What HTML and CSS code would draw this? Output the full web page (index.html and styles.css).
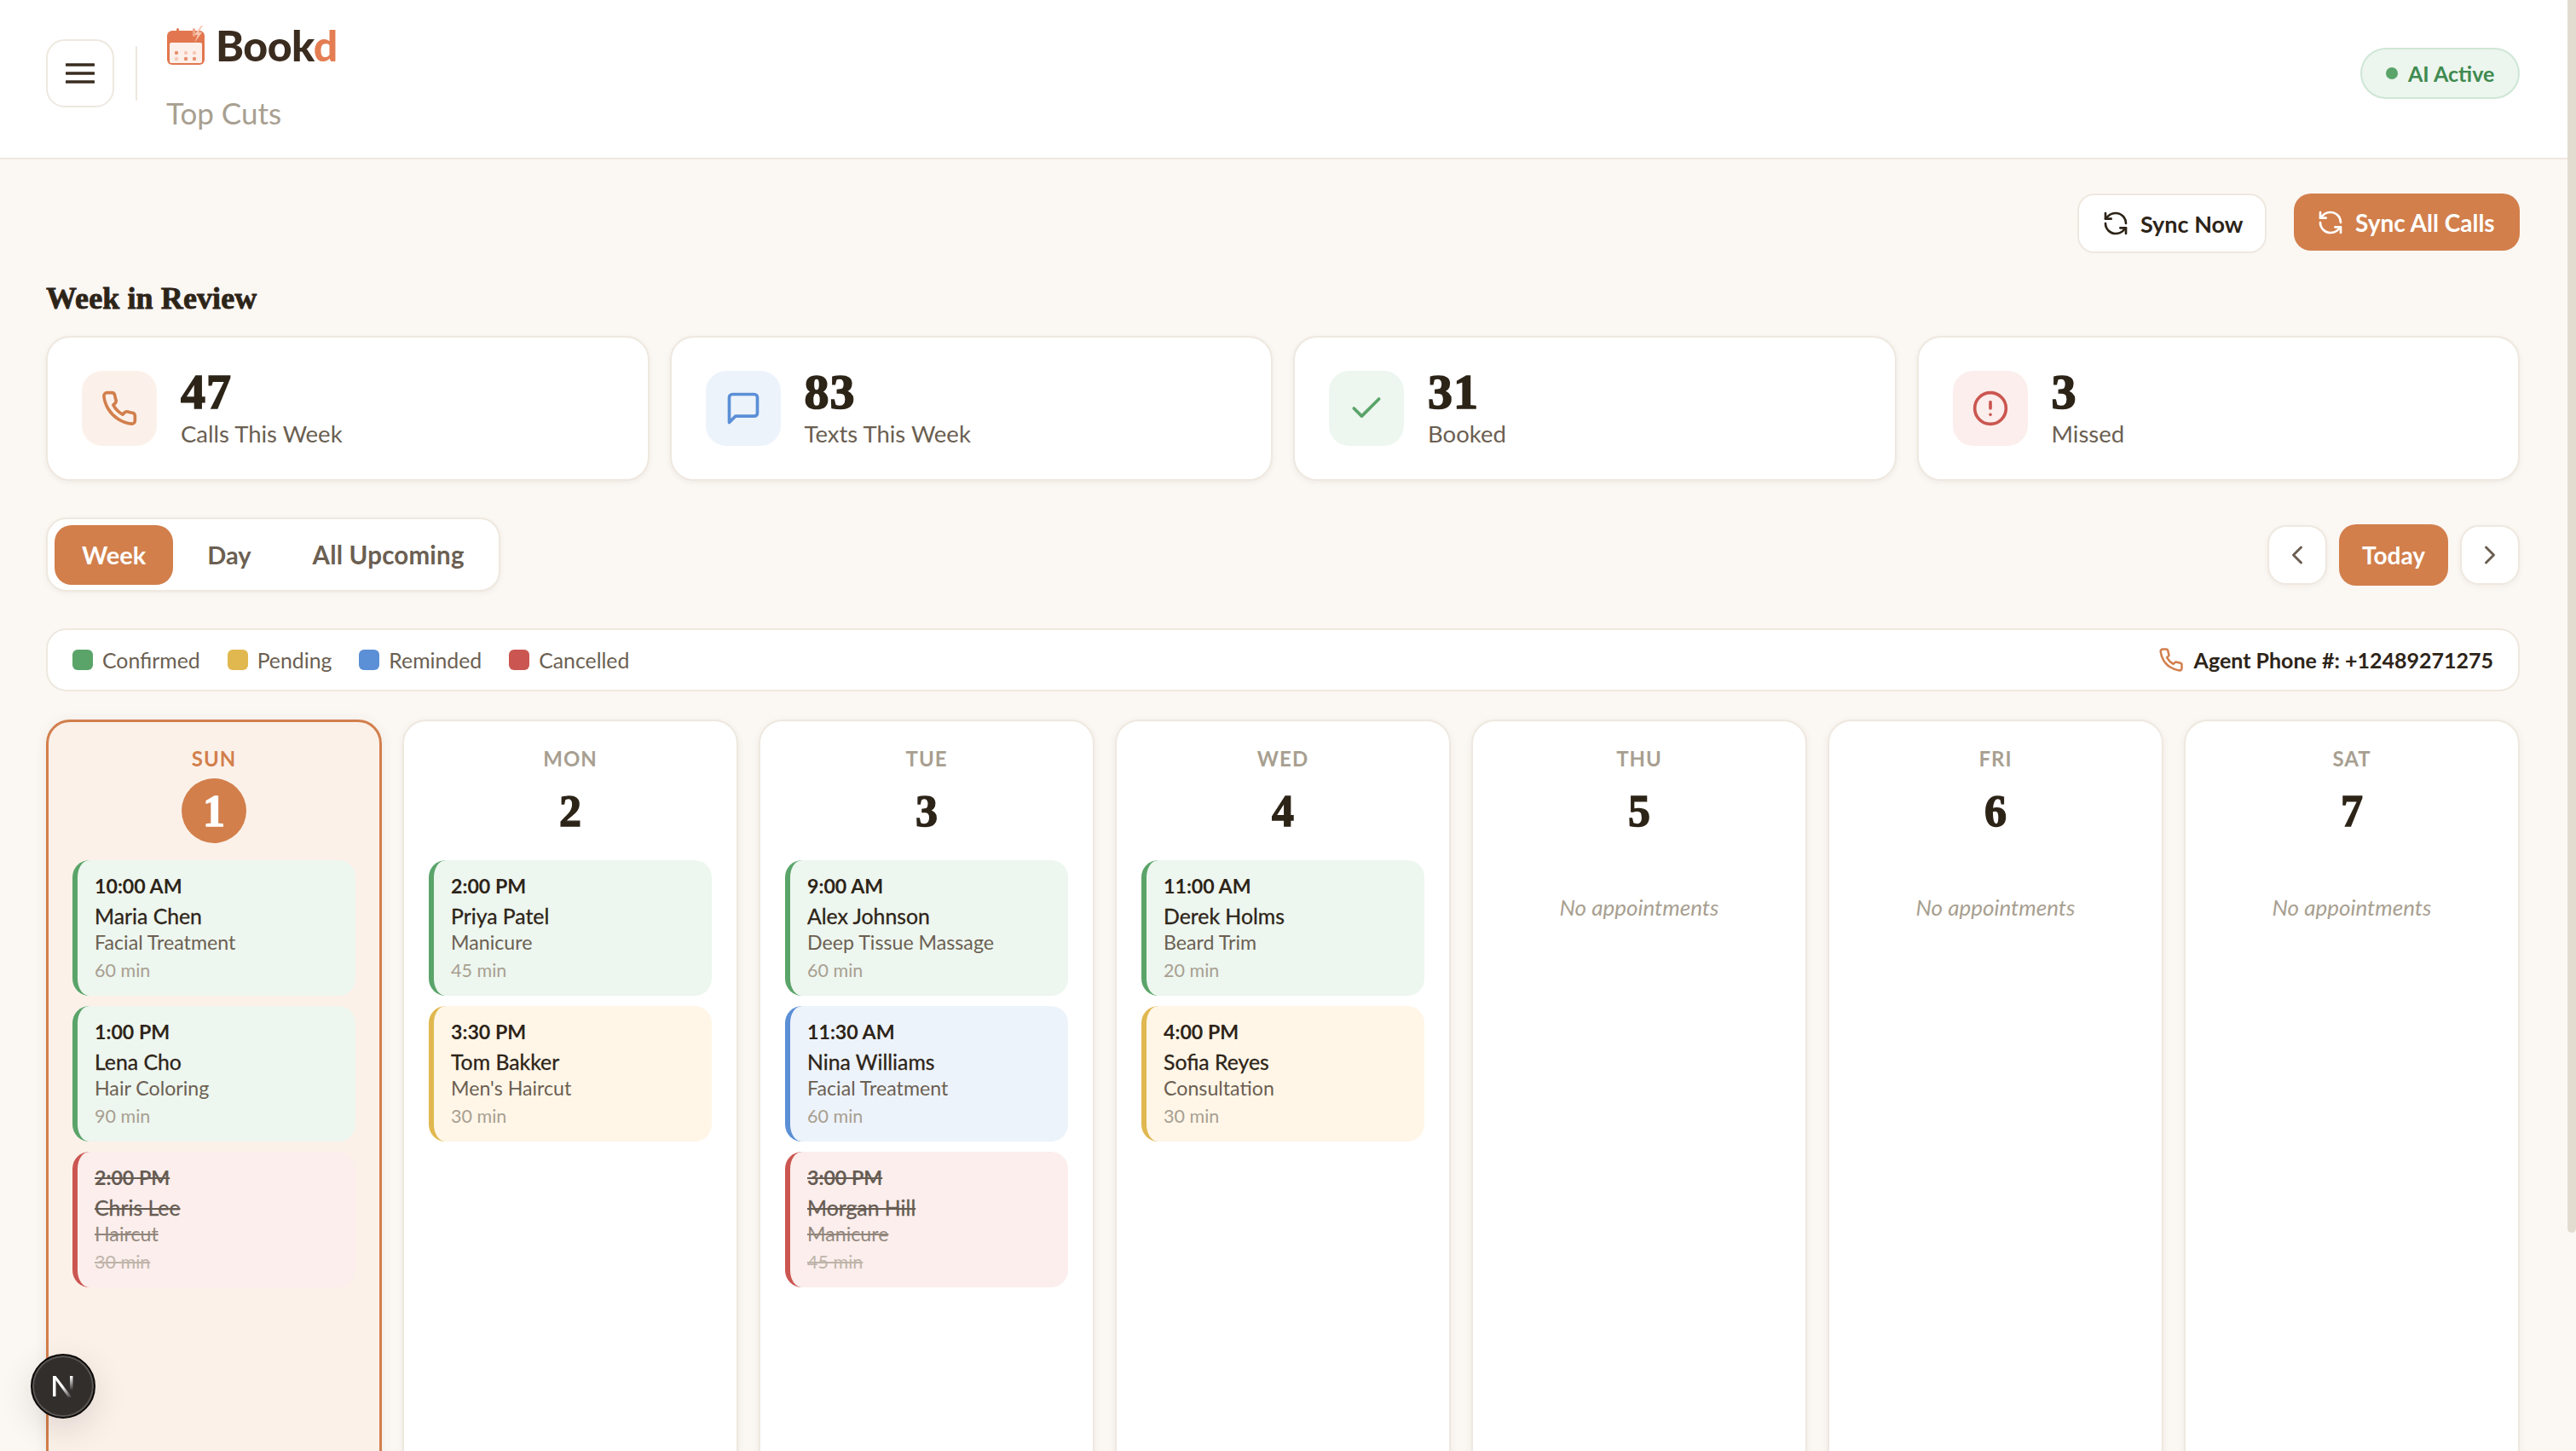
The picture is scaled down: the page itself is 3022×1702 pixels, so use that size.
FILE: index.html
```html
<!DOCTYPE html>
<html lang="en">
<head>
<meta charset="utf-8">
<title>Bookd</title>
<link rel="stylesheet" href="styles.css">
</head>
<body>
<svg class="sprite" aria-hidden="true">
  <symbol id="i-phone" viewBox="0 0 24 24"><path d="M22 16.92v3a2 2 0 0 1-2.18 2 19.79 19.79 0 0 1-8.63-3.07 19.5 19.5 0 0 1-6-6 19.79 19.79 0 0 1-3.07-8.67A2 2 0 0 1 4.11 2h3a2 2 0 0 1 2 1.72 12.84 12.84 0 0 0 .7 2.81 2 2 0 0 1-.45 2.11L8.09 9.91a16 16 0 0 0 6 6l1.27-1.27a2 2 0 0 1 2.11-.45 12.84 12.84 0 0 0 2.81.7A2 2 0 0 1 22 16.92z"/></symbol>
  <symbol id="i-sync" viewBox="0 0 24 24"><path d="M21 12a9 9 0 0 0-9-9 9.75 9.75 0 0 0-6.74 2.74L3 8"/><path d="M3 3v5h5"/><path d="M3 12a9 9 0 0 0 9 9 9.75 9.75 0 0 0 6.74-2.74L21 16"/><path d="M16 16h5v5"/></symbol>
</svg>

<header class="topbar">
  <button class="menu-btn" aria-label="Menu">
    <svg class="menu-icon" viewBox="0 0 34 24"><path d="M1 2h32M1 12h32M1 22h32"/></svg>
  </button>
  <span class="topbar-divider"></span>
  <div class="brand">
    <div class="brand-row">
      <svg class="brand-logo" viewBox="0 0 46 48">
        <rect x="1" y="7" width="44" height="40" rx="6" fill="#e2774f"/>
        <rect x="4" y="21" width="38" height="24" rx="2" fill="#fdf0ea"/>
        <rect x="12" y="4" width="3" height="10" rx="1.5" fill="#e2774f"/>
        <rect x="31" y="4" width="3" height="10" rx="1.5" fill="#f0a488"/>
        <path d="M41 1l-8 11h4l-4 9 9-12h-4l5-8z" fill="#f8c7b2"/>
        <g fill="#e8906f"><circle cx="12" cy="33" r="2.2"/><circle cx="23" cy="40" r="2.2"/><circle cx="33" cy="40" r="2.2"/></g>
        <g fill="#f6c9b7"><circle cx="23" cy="33" r="2.2"/><circle cx="12" cy="40" r="2.2"/><circle cx="33" cy="33" r="2.2"/></g>
      </svg>
      <span class="brand-name">Book<span class="brand-accent">d</span></span>
    </div>
    <div class="brand-sub">Top Cuts</div>
  </div>
  <div class="status-pill"><span class="status-dot"></span>AI Active</div>
</header>

<main class="content">
  <div class="actions">
    <button class="btn btn-ghost"><svg class="btn-icon"><use href="#i-sync"/></svg>Sync Now</button>
    <button class="btn btn-primary"><svg class="btn-icon"><use href="#i-sync"/></svg>Sync All Calls</button>
  </div>

  <h2 class="section-title">Week in Review</h2>
  <section class="stats">
    <div class="stat">
      <div class="stat-icon tint-orange"><svg class="stat-svg"><use href="#i-phone"/></svg></div>
      <div><div class="stat-num">47</div><div class="stat-label">Calls This Week</div></div>
    </div>
    <div class="stat">
      <div class="stat-icon tint-blue"><svg class="stat-svg" viewBox="0 0 24 24"><path d="M21 15a2 2 0 0 1-2 2H7l-4 4V5a2 2 0 0 1 2-2h14a2 2 0 0 1 2 2z"/></svg></div>
      <div><div class="stat-num">83</div><div class="stat-label">Texts This Week</div></div>
    </div>
    <div class="stat">
      <div class="stat-icon tint-green"><svg class="stat-svg" viewBox="0 0 24 24"><path d="M20 6 9 17l-5-5"/></svg></div>
      <div><div class="stat-num">31</div><div class="stat-label">Booked</div></div>
    </div>
    <div class="stat">
      <div class="stat-icon tint-red"><svg class="stat-svg" viewBox="0 0 24 24"><circle cx="12" cy="12" r="10"/><path d="M12 8v4M12 16h.01"/></svg></div>
      <div><div class="stat-num">3</div><div class="stat-label">Missed</div></div>
    </div>
  </section>

  <div class="toolbar">
    <div class="tabs">
      <span class="tab tab-active">Week</span>
      <span class="tab">Day</span>
      <span class="tab tab-wide">All Upcoming</span>
    </div>
    <div class="pager">
      <button class="page-btn" aria-label="Previous"><svg class="chev" viewBox="0 0 24 24"><path d="m15 18-6-6 6-6"/></svg></button>
      <button class="today-btn">Today</button>
      <button class="page-btn" aria-label="Next"><svg class="chev" viewBox="0 0 24 24"><path d="m9 18 6-6-6-6"/></svg></button>
    </div>
  </div>

  <div class="legend">
    <div class="legend-items">
      <span class="legend-item"><i class="swatch bg-green"></i>Confirmed</span>
      <span class="legend-item"><i class="swatch bg-yellow"></i>Pending</span>
      <span class="legend-item"><i class="swatch bg-blue"></i>Reminded</span>
      <span class="legend-item"><i class="swatch bg-red"></i>Cancelled</span>
    </div>
    <div class="agent"><svg class="agent-icon"><use href="#i-phone"/></svg>Agent Phone #: +12489271275</div>
  </div>

  <section class="week">
    <div class="day day-today">
      <div class="day-name">SUN</div>
      <div class="day-num">1</div>
      <div class="appts">
        <article class="appt appt-green"><div class="a-time">10:00 AM</div><div class="a-name">Maria Chen</div><div class="a-svc">Facial Treatment</div><div class="a-dur">60 min</div></article>
        <article class="appt appt-green"><div class="a-time">1:00 PM</div><div class="a-name">Lena Cho</div><div class="a-svc">Hair Coloring</div><div class="a-dur">90 min</div></article>
        <article class="appt appt-red"><div class="a-time">2:00 PM</div><div class="a-name">Chris Lee</div><div class="a-svc">Haircut</div><div class="a-dur">30 min</div></article>
      </div>
    </div>
    <div class="day">
      <div class="day-name">MON</div>
      <div class="day-num">2</div>
      <div class="appts">
        <article class="appt appt-green"><div class="a-time">2:00 PM</div><div class="a-name">Priya Patel</div><div class="a-svc">Manicure</div><div class="a-dur">45 min</div></article>
        <article class="appt appt-yellow"><div class="a-time">3:30 PM</div><div class="a-name">Tom Bakker</div><div class="a-svc">Men's Haircut</div><div class="a-dur">30 min</div></article>
      </div>
    </div>
    <div class="day">
      <div class="day-name">TUE</div>
      <div class="day-num">3</div>
      <div class="appts">
        <article class="appt appt-green"><div class="a-time">9:00 AM</div><div class="a-name">Alex Johnson</div><div class="a-svc">Deep Tissue Massage</div><div class="a-dur">60 min</div></article>
        <article class="appt appt-blue"><div class="a-time">11:30 AM</div><div class="a-name">Nina Williams</div><div class="a-svc">Facial Treatment</div><div class="a-dur">60 min</div></article>
        <article class="appt appt-red"><div class="a-time">3:00 PM</div><div class="a-name">Morgan Hill</div><div class="a-svc">Manicure</div><div class="a-dur">45 min</div></article>
      </div>
    </div>
    <div class="day">
      <div class="day-name">WED</div>
      <div class="day-num">4</div>
      <div class="appts">
        <article class="appt appt-green"><div class="a-time">11:00 AM</div><div class="a-name">Derek Holms</div><div class="a-svc">Beard Trim</div><div class="a-dur">20 min</div></article>
        <article class="appt appt-yellow"><div class="a-time">4:00 PM</div><div class="a-name">Sofia Reyes</div><div class="a-svc">Consultation</div><div class="a-dur">30 min</div></article>
      </div>
    </div>
    <div class="day"><div class="day-name">THU</div><div class="day-num">5</div><div class="empty">No appointments</div></div>
    <div class="day"><div class="day-name">FRI</div><div class="day-num">6</div><div class="empty">No appointments</div></div>
    <div class="day"><div class="day-name">SAT</div><div class="day-num">7</div><div class="empty">No appointments</div></div>
  </section>
</main>

<div class="scroll-thumb"></div>

<div class="dev-badge">
  <svg class="dev-n" viewBox="0 0 26 26">
    <defs>
      <linearGradient id="n-diag" x1="0" y1="0" x2="1" y2="1"><stop offset="0.5" stop-color="#fff"/><stop offset="1" stop-color="#fff" stop-opacity="0"/></linearGradient>
      <linearGradient id="n-stem" x1="0" y1="0" x2="0" y2="1"><stop offset="0" stop-color="#fff"/><stop offset="1" stop-color="#fff" stop-opacity="0"/></linearGradient>
    </defs>
    <path d="M1 1h3.5v24H1z" fill="#fff"/>
    <path d="M1 1h3.5l19 25h-4.5z" fill="url(#n-diag)"/>
    <rect x="21" y="1" width="3.5" height="17" fill="url(#n-stem)"/>
  </svg>
</div>
</body>
</html>
```

FILE: styles.css
```css
* { box-sizing: border-box; }
html, body { margin: 0; height: 100%; overflow: hidden; }
body {
  background: #fbf7f3;
  color: #2d2418;
  font-family: "Lato", "Noto Sans", sans-serif;
  padding-right: 10px;
}
button { font-family: inherit; cursor: pointer; }
.sprite { position: absolute; width: 0; height: 0; }

/* Top bar */
.topbar {
  height: 187px;
  background: #fff;
  border-bottom: 2px solid #eee8df;
  display: flex;
  align-items: flex-start;
  padding: 0 56px 0 54px;
}
.menu-btn {
  width: 80px; height: 80px;
  margin-top: 46px;
  background: #fff;
  border: 2px solid #eee8df;
  border-radius: 22px;
  padding: 0;
  display: flex; align-items: center; justify-content: center;
}
.menu-icon { width: 34px; height: 24px; fill: none; stroke: #3a2d20; stroke-width: 3.5; stroke-linecap: round; }
.topbar-divider { width: 2px; height: 64px; margin: 54px 34px 0 25px; background: #eee8df; }
.brand { display: flex; flex-direction: column; gap: 32px; padding-top: 29px; }
.brand-row { display: flex; align-items: center; gap: 12px; height: 48px; }
.brand-logo { width: 46px; height: 48px; }
.brand-name { font-size: 50px; font-weight: 900; color: #3b2c20; letter-spacing: -0.5px; }
.brand-accent { color: #e47e52; }
.brand-sub { font-size: 35px; line-height: 46px; color: #a89f91; }
.status-pill {
  margin: 56px 0 0 auto;
  height: 60px; width: 187px;
  border-radius: 30px;
  background: #ecf5ee;
  border: 2px solid #cfe6d6;
  color: #3f8a50;
  font-size: 25px; font-weight: 700;
  display: flex; align-items: center; gap: 12px;
  padding-left: 28px;
}
.status-dot { width: 14px; height: 14px; border-radius: 50%; background: #5aa469; }

/* Content */
.content { padding: 40px 56px 0 54px; }
.actions { display: flex; justify-content: flex-end; align-items: flex-start; gap: 32px; height: 70px; }
.btn {
  display: flex; align-items: center; gap: 13px;
  border-radius: 20px;
  font-size: 28px; font-weight: 700;
  padding: 0 27px;
  white-space: nowrap;
}
.btn-ghost { height: 70px; width: 222px; background: #fff; border: 2px solid #eee8df; color: #2d2418; font-size: 27px; }
.btn-primary { height: 67px; width: 265px; background: #d27f4c; border: 0; color: #fff; }
.btn-icon { width: 32px; height: 32px; flex: none; fill: none; stroke: currentColor; stroke-width: 2; stroke-linecap: round; stroke-linejoin: round; }

.section-title {
  font-family: "Liberation Serif", serif;
  font-size: 36px; line-height: 40px; font-weight: 700;
  letter-spacing: 0.1px;
  color: #2d2418;
  -webkit-text-stroke: 0.8px #2d2418;
  margin: 33px 0 0;
}
.stats { display: grid; grid-template-columns: repeat(4, 1fr); gap: 24px; margin-top: 24px; }
.stat {
  height: 170px;
  background: #fff;
  border: 2px solid #eee8df;
  border-radius: 28px;
  box-shadow: 0 2px 6px rgba(90, 70, 40, 0.07);
  display: flex; align-items: center; gap: 28px;
  padding-left: 40px;
}
.stat-icon { width: 88px; height: 88px; border-radius: 24px; display: flex; align-items: center; justify-content: center; flex: none; }
.stat-svg { width: 44px; height: 44px; fill: none; stroke: currentColor; stroke-width: 2; stroke-linecap: round; stroke-linejoin: round; }
.tint-orange { background: #fcf1ea; color: #d27f4c; }
.tint-blue { background: #edf3fb; color: #5b8fd6; }
.tint-green { background: #edf6ef; color: #5aa469; }
.tint-red { background: #fbeeec; color: #cb5651; }
.stat-num {
  font-family: "Liberation Serif", serif;
  font-size: 58px; line-height: 58px; font-weight: 700;
  letter-spacing: 1px;
  color: #2d2418;
  -webkit-text-stroke: 1.6px #2d2418;
}
.stat-label { font-size: 27.5px; line-height: 36px; color: #6b5f52; margin-top: 2px; }

.toolbar { display: flex; justify-content: space-between; align-items: center; margin-top: 43px; height: 87px; }
.tabs {
  height: 87px;
  background: #fff;
  border: 2px solid #eee8df;
  border-radius: 24px;
  box-shadow: 0 2px 6px rgba(90, 70, 40, 0.06);
  display: flex; align-items: center; gap: 8px;
  padding: 0 8px;
}
.tab { height: 70px; padding: 0 32px; border-radius: 20px; display: flex; align-items: center; font-size: 29px; font-weight: 700; color: #6b5f52; }
.tab-wide { font-size: 29.5px; letter-spacing: 0.2px; }
.tab-active { background: #d27f4c; color: #fff; }
.pager { display: flex; align-items: center; gap: 14px; }
.page-btn {
  width: 70px; height: 70px;
  background: #fff;
  border: 2px solid #eee8df;
  border-radius: 22px;
  box-shadow: 0 2px 6px rgba(90, 70, 40, 0.06);
  padding: 0;
  display: flex; align-items: center; justify-content: center;
}
.chev { width: 36px; height: 36px; fill: none; stroke: #6b5f52; stroke-width: 2; stroke-linecap: round; stroke-linejoin: round; }
.today-btn { width: 128px; height: 72px; background: #d27f4c; border: 0; border-radius: 20px; color: #fff; font-size: 28px; font-weight: 700; padding: 0; }

.legend {
  height: 74px;
  margin-top: 43px;
  background: #fff;
  border: 2px solid #eee8df;
  border-radius: 24px;
  display: flex; align-items: center; justify-content: space-between;
  padding: 0 29px;
}
.legend-items { display: flex; gap: 32px; }
.legend-item { display: flex; align-items: center; gap: 11px; font-size: 24.8px; color: #6b5f52; }
.swatch { width: 24px; height: 24px; border-radius: 6px; display: block; }
.bg-green { background: #5aa469; }
.bg-yellow { background: #e0b84f; }
.bg-blue { background: #5b8fd6; }
.bg-red { background: #cb5651; }
.agent { display: flex; align-items: center; gap: 12px; font-size: 25px; font-weight: 700; color: #2d2418; }
.agent-icon { width: 30px; height: 30px; fill: none; stroke: #d27f4c; stroke-width: 2; stroke-linecap: round; stroke-linejoin: round; }

.week { display: grid; grid-template-columns: repeat(7, 1fr); gap: 24px; margin-top: 33px; }
.day {
  height: 1100px;
  background: #fff;
  border: 2px solid #eee8df;
  border-radius: 28px;
  box-shadow: 0 2px 8px rgba(90, 70, 40, 0.07);
  padding: 28px 29px 0;
  display: flex; flex-direction: column; align-items: stretch;
}
.day-today { background: #fbf1e9; border: 3px solid #d27f4c; padding: 27px 28px 0; box-shadow: 0 2px 16px rgba(90, 70, 40, 0.08); }
.day-name { text-align: center; font-size: 24px; line-height: 32px; font-weight: 700; letter-spacing: 1px; color: #a89f91; }
.day-today .day-name { color: #d27f4c; }
.day-num {
  align-self: center;
  width: 76px; height: 76px;
  margin: 7px 0 20px;
  border-radius: 50%;
  display: flex; align-items: center; justify-content: center;
  font-family: "Liberation Serif", serif;
  font-size: 52px; font-weight: 700;
  color: #2d2418;
  -webkit-text-stroke: 1.4px currentColor;
}
.day-today .day-num { background: #d27f4c; color: #fff; }
.appts { display: flex; flex-direction: column; gap: 12px; }
.appt { height: 159px; border-radius: 20px; border-left: 6px solid; padding: 14px 0 0 20px; }
.appt-green { background: #edf6ef; border-color: #5aa469; }
.appt-yellow { background: #fff6e8; border-color: #e0b84f; }
.appt-blue { background: #edf3fb; border-color: #5b8fd6; }
.appt-red { background: #fbeeec; border-color: #cb5651; }
.a-time { font-size: 23.2px; line-height: 32px; font-weight: 700; color: #2d2418; }
.a-name { font-size: 24.8px; line-height: 36px; font-weight: 400; color: #2d2418; margin-top: 2px; -webkit-text-stroke: 0.3px #2d2418; }
.a-svc { font-size: 23.2px; line-height: 26px; color: #6b5f52; margin-top: -1px; }
.a-dur { font-size: 21.5px; line-height: 26px; color: #a89f91; margin-top: 7px; }
.appt-red .a-time, .appt-red .a-name, .appt-red .a-svc, .appt-red .a-dur { text-decoration: line-through; opacity: 0.72; }
.empty { text-align: center; font-size: 26px; line-height: 32px; font-style: italic; color: #a89f91; padding-top: 39px; }

/* Overlays */
.scroll-thumb { position: fixed; top: 0; right: 0; width: 10px; height: 1446px; background: #e2dcd0; border-radius: 0 0 5px 5px; }
.dev-badge {
  position: fixed; left: 36px; top: 1588px;
  width: 76px; height: 76px;
  border-radius: 50%;
  background: #322e2c;
  border: 2px solid #0c0a09;
  box-shadow: inset 0 0 0 2px #5a5653, 0 12px 40px rgba(0, 0, 0, 0.12);
  display: flex; align-items: center; justify-content: center;
}
.dev-n { width: 26px; height: 26px; }
```
